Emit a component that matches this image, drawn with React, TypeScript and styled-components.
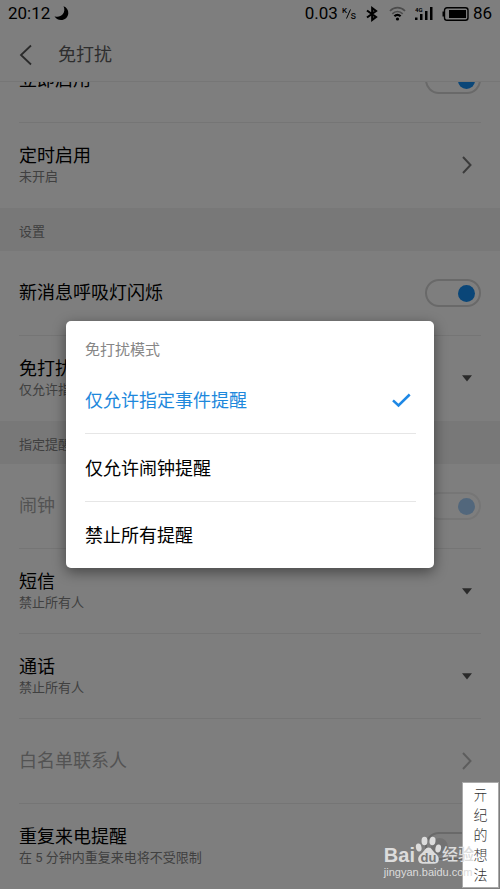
import React, { useState } from "react";
import type { ReactNode } from "react";
import styled, { createGlobalStyle } from "styled-components";

const fontStack = `Roboto, "Noto Sans CJK SC", sans-serif`;

const GlobalStyle = createGlobalStyle`
  *, *::before, *::after { box-sizing: border-box; }
  body {
    margin: 0;
    background: #fdfdfd;
    font-family: ${fontStack};
    color: #000;
  }
  button, input, select { font: inherit; color: inherit; margin: 0; }
`;

const Screen = styled.div`
  position: relative;
  height: 100vh;
  display: flex;
  flex-direction: column;
  overflow: hidden;
`;

const StatusBar = styled.div`
  display: flex;
  align-items: center;
  justify-content: space-between;
  height: 27px;
  flex: none;
  padding: 0 8px;
  font-size: 17px;
  line-height: 27px;
`;

const StatusGroup = styled.div<{ $gap: number }>`
  display: flex;
  align-items: center;
  gap: ${(p) => p.$gap}px;
`;

const Speed = styled.span`
  display: flex;
  align-items: center;
  gap: 4px;
`;

const Header = styled.header`
  display: flex;
  align-items: center;
  flex: none;
  height: 55px;
  padding: 2px 0 0 18px;
  gap: 24px;
  border-bottom: 1px solid #ececec;
`;

const BackButton = styled.button`
  display: flex;
  padding: 0;
  border: 0;
  background: none;
`;

const HeaderTitle = styled.h1`
  margin: 0;
  font-size: 18px;
  line-height: 24px;
  font-weight: 400;
  color: #5c5c5c;
`;

const List = styled.main`
  flex: 1;
  min-height: 0;
  overflow: hidden;
`;

const ScrolledRow = styled.div`
  display: flex;
  align-items: flex-end;
  height: 41px;
  overflow: hidden;
`;

const Row = styled.div<{ $last?: boolean }>`
  flex: 1;
  display: flex;
  align-items: center;
  justify-content: space-between;
  height: 85px;
  margin: 0 19px;
  border-bottom: 1px solid ${(p) => (p.$last ? "transparent" : "#ebebeb")};
`;

const RowButton = styled.button`
  flex: 1;
  display: flex;
  align-items: center;
  justify-content: space-between;
  padding: 0;
  border: 0;
  background: none;
  text-align: left;
`;

const RowText = styled.span`
  display: flex;
  flex-direction: column;
`;

const Title = styled.label<{ $muted?: boolean }>`
  font-size: 18px;
  line-height: 24px;
  color: ${(p) => (p.$muted ? "#a6a6a6" : "#000")};
`;

const Subtitle = styled.span`
  font-size: 13px;
  line-height: 18px;
  color: #808080;
`;

const ValueSelect = styled.select`
  appearance: none;
  height: 18px;
  padding: 0;
  border: 0;
  background: none;
  font-size: 13px;
  line-height: 18px;
  color: #808080;
`;

const SectionTitle = styled.h2`
  margin: 0;
  height: 43px;
  padding: 5px 19px 0;
  background: #f1f1f1;
  font-size: 13px;
  line-height: 38px;
  font-weight: 400;
  color: #808080;
`;

const Accessory = styled.span`
  display: flex;
  justify-content: center;
  width: 28px;
`;

const Toggle = styled.input`
  appearance: none;
  display: flex;
  align-items: center;
  justify-content: flex-start;
  flex: none;
  width: 56px;
  height: 28px;
  padding: 0 4px;
  border: 2px solid #d2d2d2;
  border-radius: 14px;
  &::before {
    content: "";
    width: 17px;
    height: 17px;
    border-radius: 50%;
    background: #e4e4e4;
  }
  &:checked { justify-content: flex-end; }
  &:checked::before { background: #148cf0; }
  &:disabled { border-color: #ececec; }
  &:disabled::before { background: #a4cff8; }
`;

const Scrim = styled.div`
  position: absolute;
  inset: 0;
  display: flex;
  align-items: center;
  justify-content: center;
  padding: 0 66px;
  background: rgba(0, 0, 0, 0.5);
`;

const Dialog = styled.fieldset`
  flex: 1;
  min-width: 0;
  margin: 0;
  padding: 17px 18px 0 19px;
  border: 0;
  border-radius: 5px;
  background: #fff;
  box-shadow: 0 4px 14px rgba(0, 0, 0, 0.45);
`;

const DialogTitle = styled.legend`
  float: left;
  width: 100%;
  padding: 0;
  margin-bottom: 4px;
  font-size: 15px;
  line-height: 24px;
  color: #868686;
`;

const Option = styled.label<{ $selected: boolean }>`
  clear: both;
  display: flex;
  align-items: center;
  justify-content: space-between;
  height: 68px;
  padding: 2px 5px 0 0;
  border-bottom: 1px solid #e6e6e6;
  font-size: 18px;
  line-height: 24px;
  color: ${(p) => (p.$selected ? "#1e88dc" : "#000")};
  &:last-child { height: 66px; border-bottom: 0; }
`;

const OptionRadio = styled.input`
  appearance: none;
  position: absolute;
  opacity: 0;
`;

const Watermark = styled.div`
  position: absolute;
  right: 26px;
  bottom: 10px;
  display: flex;
  flex-direction: column;
  align-items: flex-start;
  color: #dcdcdc;
`;

const Brand = styled.div`
  display: flex;
  align-items: flex-end;
  font-family: "Liberation Sans", "Noto Sans CJK SC", sans-serif;
  font-size: 20px;
  line-height: 20px;
  font-weight: 700;
`;

const BrandCn = styled.span`
  font-size: 16px;
  font-weight: 500;
`;

const WatermarkUrl = styled.span`
  font-family: "Liberation Sans", sans-serif;
  font-size: 11px;
  line-height: 14px;
`;

const Seal = styled.div`
  position: absolute;
  right: 1px;
  bottom: 1px;
  display: flex;
  flex-direction: column;
  align-items: center;
  width: 37px;
  padding: 2px 0;
  border: 1px solid #aaa;
  background: #fff;
  font-size: 14px;
  line-height: 20px;
  font-weight: 300;
  color: #333;
`;

const Moon = () => (
  <svg width="15" height="15" viewBox="0 0 15 15" aria-hidden="true">
    <path d="M9.5 0.3C12.6 1.4 14.5 4 14.3 7.2C14 11.3 10.9 14 7 14C4 14 1.7 12.6 0.5 10.2C3.5 11.3 6.8 10.6 8.7 8.3C10.6 6 10.9 3 9.5 .3Z" fill="#000" />
  </svg>
);

const SpeedUnit = () => (
  <svg width="15" height="14" viewBox="0 0 15 14" aria-label="K/s">
    <text x="0" y="6" fontFamily="Roboto, sans-serif" fontSize="8" fontWeight="500">K</text>
    <path d="M4.5 11.5L8.5 2.5" stroke="#000" />
    <text x="8.5" y="12" fontFamily="Roboto, sans-serif" fontSize="11">s</text>
  </svg>
);

const Bluetooth = () => (
  <svg width="14" height="16" viewBox="0 0 14 16" fill="none" stroke="#000" strokeWidth="2.1" aria-hidden="true">
    <path d="M1 4.500L10 11L6.200 13.800V2.200L10 5L1 11.500" />
  </svg>
);

const Wifi = () => (
  <svg width="17" height="15" viewBox="0 0 17 15" fill="none" strokeWidth="1.7" aria-hidden="true">
    <path d="M1 5C5 .6 12 .6 16 5" stroke="#999" />
    <path d="M3.300 7.800C6.200 4.700 10.800 4.700 13.700 7.800" stroke="#999" />
    <path d="M5.400 10.300C7.200 8.400 9.800 8.400 11.600 10.300" stroke="#000" strokeWidth="2.2" />
    <circle cx="8.5" cy="13" r="1.6" fill="#000" />
  </svg>
);

const Signal = () => (
  <svg width="18" height="15" viewBox="0 0 18 15" aria-label="4G">
    <text x="0" y="5.5" fontFamily="Roboto, sans-serif" fontSize="6" fontWeight="700">4G</text>
    <path d="M0 11.500h2.500v2.500H0zM5 8h2.500v6H5zM10 5h2.500v9H10zM15 1h2.500v13H15z" />
  </svg>
);

const Battery = () => (
  <svg width="27" height="14" viewBox="0 0 27 14" aria-hidden="true">
    <rect x="2.5" y=".8" width="23.5" height="12.4" rx="2.5" fill="none" stroke="#000" strokeWidth="1.4" />
    <path d="M2 4.500H0.500V9.500H2z" />
    <rect x="7" y="3" width="17" height="8" />
  </svg>
);

const Back = () => (
  <svg width="16" height="22" viewBox="0 0 16 22" fill="none" stroke="#555" strokeWidth="1.8" aria-hidden="true">
    <path d="M13 1.500L3 11L13 20.500" />
  </svg>
);

const Chevron = ({ color }: { color: string }) => (
  <svg width="10" height="18" viewBox="0 0 10 18" fill="none" stroke={color} strokeWidth="2" aria-hidden="true">
    <path d="M1 1L8.500 9L1 17" />
  </svg>
);

const Triangle = () => (
  <svg width="10" height="7" viewBox="0 0 10 7" fill="#555" aria-hidden="true">
    <path d="M0 .3H10L5 6.500Z" />
  </svg>
);

const Check = () => (
  <svg width="19" height="15" viewBox="0 0 19 15" fill="none" stroke="#1e88e5" strokeWidth="2.5" aria-hidden="true">
    <path d="M1 7.300L6.500 12.500L17.700 1.500" />
  </svg>
);

const Paw = () => (
  <svg width="27" height="29" viewBox="0 0 26 29" fill="#dcdcdc" aria-label="du">
    <ellipse cx="9" cy="5" rx="3" ry="4.200" />
    <ellipse cx="17" cy="5" rx="3" ry="4.200" transform="rotate(8 17 5)" />
    <ellipse cx="3.200" cy="11.500" rx="2.800" ry="4" transform="rotate(-12 3.200 11.500)" />
    <ellipse cx="22.700" cy="12.500" rx="2.800" ry="4" transform="rotate(12 22.700 12.500)" />
    <path d="M13 11.500C16 11.500 17.200 15 19.500 17C22.500 19.500 24 21.500 23 25C22 28.500 17.500 27.700 13 27.700S4 28.500 3 25C2 21.500 3.500 19.500 6.500 17C8.800 15 10 11.500 13 11.500Z" />
    <text x="13" y="25.5" textAnchor="middle" fontFamily="Liberation Sans, sans-serif" fontSize="13" fontWeight="700" fill="#777">du</text>
  </svg>
);

function SwitchRow({ id, title, checked, disabled, last }: { id: string; title: string; checked?: boolean; disabled?: boolean; last?: boolean }) {
  return (
    <Row $last={last}>
      <Title htmlFor={id} $muted={disabled}>{title}</Title>
      <Toggle id={id} type="checkbox" role="switch" defaultChecked={checked} disabled={disabled} />
    </Row>
  );
}

function LinkRow({ title, detail, disabled, icon, last }: { title: string; detail?: string; disabled?: boolean; icon: ReactNode; last?: boolean }) {
  return (
    <Row $last={last}>
      <RowButton type="button" disabled={disabled}>
        <RowText>
          <Title as="span" $muted={disabled}>{title}</Title>
          {detail && <Subtitle>{detail}</Subtitle>}
        </RowText>
        <Accessory>{icon}</Accessory>
      </RowButton>
    </Row>
  );
}

function SelectRow({ id, title }: { id: string; title: string }) {
  return (
    <Row>
      <RowText>
        <Title htmlFor={id}>{title}</Title>
        <ValueSelect id={id} defaultValue="禁止所有人">
          <option>禁止所有人</option>
        </ValueSelect>
      </RowText>
      <Accessory><Triangle /></Accessory>
    </Row>
  );
}

const modes = ["仅允许指定事件提醒", "仅允许闹钟提醒", "禁止所有提醒"];

export default function App() {
  const [mode, setMode] = useState(modes[0]);
  return (
    <Screen>
      <GlobalStyle />
      <StatusBar>
        <StatusGroup $gap={4}>
          <span>20:12</span>
          <Moon />
        </StatusGroup>
        <StatusGroup $gap={9}>
          <Speed>0.03<SpeedUnit /></Speed>
          <Bluetooth />
          <Wifi />
          <Signal />
          <Speed><Battery />86</Speed>
        </StatusGroup>
      </StatusBar>
      <Header>
        <BackButton type="button" aria-label="返回"><Back /></BackButton>
        <HeaderTitle>免打扰</HeaderTitle>
      </Header>
      <List>
        <ScrolledRow>
          <SwitchRow id="enable-now" title="立即启用" checked />
        </ScrolledRow>
        <LinkRow title="定时启用" detail="未开启" icon={<Chevron color="#777" />} last />
        <SectionTitle>设置</SectionTitle>
        <SwitchRow id="light" title="新消息呼吸灯闪烁" checked />
        <LinkRow title="免打扰模式" detail={mode} icon={<Triangle />} last />
        <SectionTitle>指定提醒事件</SectionTitle>
        <SwitchRow id="alarm" title="闹钟" checked disabled />
        <SelectRow id="sms" title="短信" />
        <SelectRow id="call" title="通话" />
        <LinkRow title="白名单联系人" disabled icon={<Chevron color="#bbb" />} />
        <Row $last>
          <RowText>
            <Title htmlFor="repeat">重复来电提醒</Title>
            <Subtitle>在 5 分钟内重复来电将不受限制</Subtitle>
          </RowText>
          <Toggle id="repeat" type="checkbox" role="switch" />
        </Row>
      </List>
      <Scrim>
        <Dialog role="dialog" aria-modal="true">
          <DialogTitle>免打扰模式</DialogTitle>
          {modes.map((m) => (
            <Option key={m} $selected={m === mode}>
              <OptionRadio type="radio" name="mode" checked={m === mode} onChange={() => setMode(m)} />
              {m}
              {m === mode && <Check />}
            </Option>
          ))}
        </Dialog>
      </Scrim>
      <Seal>
        {[..."亓纪的想法"].map((c) => <span key={c}>{c}</span>)}
      </Seal>
      <Watermark>
        <Brand>Bai<Paw /><BrandCn>经验</BrandCn></Brand>
        <WatermarkUrl>jingyan.baidu.com</WatermarkUrl>
      </Watermark>
    </Screen>
  );
}
